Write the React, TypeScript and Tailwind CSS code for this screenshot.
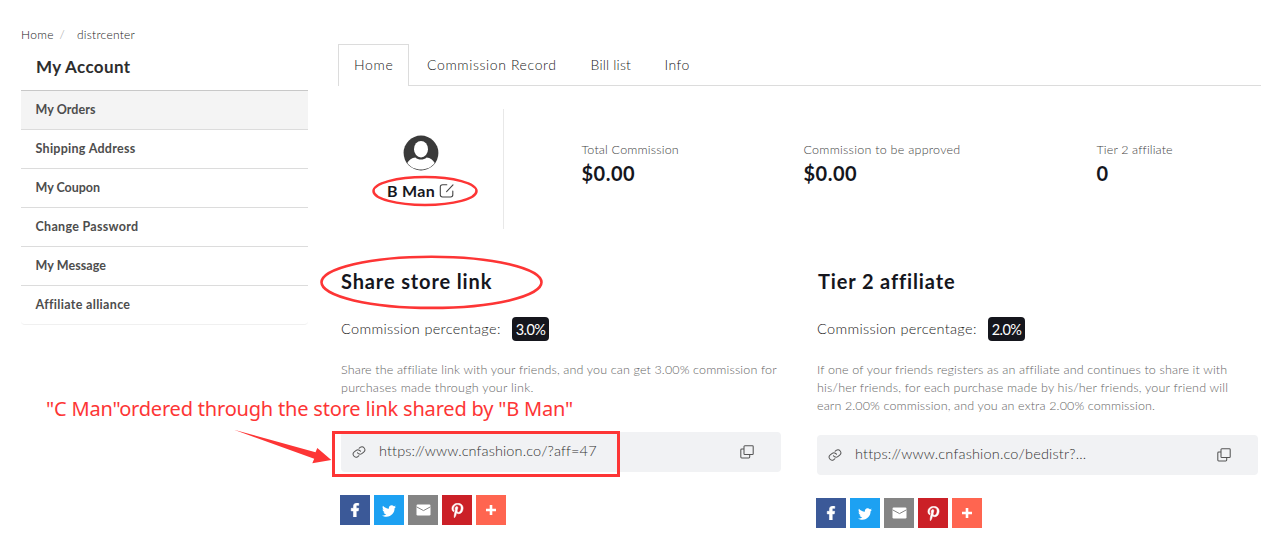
import type { ReactNode } from "react";
import { FaFacebookF, FaPinterestP, FaTwitter } from "react-icons/fa";

const menu = [
  { label: "My Orders", cls: "tracking-[0.066px] bg-[#f4f4f4] border-[#dcdcdc]" },
  { label: "Shipping Address", cls: "tracking-[0.279px] border-[#dcdcdc]" },
  { label: "My Coupon", cls: "tracking-[-0.023px] border-[#dcdcdc]" },
  { label: "Change Password", cls: "tracking-[0.301px] border-[#dcdcdc]" },
  { label: "My Message", cls: "tracking-[0.08px] border-[#dcdcdc]" },
  { label: "Affiliate alliance", cls: "tracking-[0.32px] border-[#f0f0f0] rounded-b" },
];

function Sidebar() {
  return (
    <aside className="w-[287px] shrink-0 pt-[27px]">
      <nav className="flex h-4 items-center text-[12px] font-light leading-4 text-[#222]">
        <span className="w-[38.5px] tracking-[0.35px]">Home</span>
        <span className="w-[17.5px] text-[#999]">/</span>
        <span className="tracking-[0.243px]">distrcenter</span>
      </nav>
      <h2 className="flex h-[48px] items-center border-b border-[#c8c8c8] pl-[15px] text-[17px] font-bold tracking-[0.369px] text-[#2d2d2d]">
        My Account
      </h2>
      <ul>
        {menu.map((m) => (
          <li key={m.label} className={`flex h-[39px] items-center border-b pl-[14.5px] pt-px text-[12.5px] font-bold text-[#4d4d4d] ${m.cls}`}>
            {m.label}
          </li>
        ))}
      </ul>
    </aside>
  );
}

function Tabs() {
  return (
    <div className="flex h-[42px] border-b border-[#dcdcdc] text-[14px] font-light leading-[41px] text-[#222]">
      <div className="-mb-px h-[42px] w-[71px] border border-b-0 border-[#dcdcdc] bg-white pl-[15px] leading-[39px] tracking-[0.7px]">Home</div>
      <div className="w-[163px] pl-[18px] tracking-[0.62px]">Commission Record</div>
      <div className="w-[74px] pl-[18.5px] tracking-[0.2px]">Bill list</div>
      <div className="pl-[18.5px] tracking-[0.45px]">Info</div>
    </div>
  );
}

function Stat({ className, label, value }: { className: string; label: ReactNode; value: string }) {
  return (
    <div className={`shrink-0 pt-[33px] ${className}`}>
      <div className="h-4 whitespace-nowrap text-[12.5px] font-light leading-4 text-[#444]">{label}</div>
      <div className="mt-[3px] h-6 text-[20px] font-bold leading-6 tracking-[0.5px] text-[#15161d]">{value}</div>
    </div>
  );
}

function Avatar() {
  return (
    <svg className="h-9 w-9" viewBox="0 0 36 36">
      <circle cx="18" cy="18" r="17.4" fill="#3a3a3a" />
      <ellipse cx="18" cy="14.2" rx="7" ry="8.3" fill="#fff" />
      <path d="M4.3 28C5.8 24.8 8.8 22.6 12.4 22.4C15.4 25.2 20.6 25.2 23.6 22.4C27.2 22.6 30.2 24.8 31.7 28C28.5 32.4 23.5 34.5 18 34.5C12.5 34.5 7.5 32.4 4.3 28Z" fill="#fff" />
    </svg>
  );
}

function EditIcon() {
  return (
    <svg className="h-4 w-4" viewBox="0 0 16 16" fill="none" stroke="#444" strokeWidth="1.1" strokeLinecap="round" strokeLinejoin="round">
      <path d="M7.8 1.8H3.6Q1.3 1.8 1.3 4V11.8Q1.3 14 3.6 14H11.6Q13.8 14 13.8 11.8V8M7.6 8.6L14 1.9" />
    </svg>
  );
}

function LinkIcon() {
  return (
    <svg className="h-[14px] w-[14px]" viewBox="0 0 24 24" fill="none" stroke="#555" strokeWidth="1.7" strokeLinecap="round" strokeLinejoin="round">
      <g transform="rotate(7 12 12)">
        <path d="M9.5 13.5a5 5 0 0 0 7.54.54l3-3a5 5 0 0 0-7.07-7.07l-1.72 1.71" />
        <path d="M14.5 10.5a5 5 0 0 0-7.54-.54l-3 3a5 5 0 0 0 7.07 7.07l1.71-1.71" />
      </g>
    </svg>
  );
}

function CopyIcon() {
  return (
    <svg className="h-[14px] w-[14px]" viewBox="0 0 14 14" fill="none" stroke="#555" strokeWidth="1.05">
      <rect x="4" y="0.8" width="9.2" height="8.7" rx="0.8" />
      <path d="M4 4H1.7Q0.8 4 0.8 4.9V12.1Q0.8 13 1.7 13H8.8Q9.7 13 9.7 12.1V9.5" />
    </svg>
  );
}

function ShareButtons() {
  const box = "flex h-[30px] w-[30px] items-center justify-center text-white";
  return (
    <div className="-ml-px mt-[23px] flex gap-1">
      <div className={`${box} bg-[#3b5998]`}><FaFacebookF size={14} stroke="white" strokeWidth={22} /></div>
      <div className={`${box} bg-[#1da1f2]`}><FaTwitter size={14} className="mt-px" /></div>
      <div className={`${box} bg-[#848484]`}>
        <svg className="h-[12px] w-[15px]" viewBox="0 0 15 12">
          <rect x="0.5" y="0.5" width="14" height="11" rx="1.2" fill="#fff" />
          <path d="M0.5 2.8L7.5 6.6L14.5 2.8" fill="none" stroke="#848484" strokeWidth="1" />
        </svg>
      </div>
      <div className={`${box} bg-[#cb2027]`}><FaPinterestP size={15} stroke="white" strokeWidth={16} /></div>
      <div className={`${box} bg-[#ff6550]`}>
        <svg className="h-[10px] w-[10px]" viewBox="0 0 10 10"><path d="M5 0V10M0 5H10" stroke="#fff" strokeWidth="2.6" /></svg>
      </div>
    </div>
  );
}

function Panel({ title, rate, children, link, bodyClass }: { title: ReactNode; rate: string; children: ReactNode; link: ReactNode; bodyClass: string }) {
  return (
    <section>
      <h3 className="-mt-px h-7 whitespace-nowrap text-[20px] font-bold leading-7 text-[#15161d]">{title}</h3>
      <div className="mt-[22px] flex h-6 items-center text-[14.5px]">
        <span className="w-[171px] whitespace-nowrap font-light tracking-[0.32px] text-[#222]">Commission percentage:</span>
        <span className="flex h-6 w-[37px] items-center justify-center rounded-sm bg-[#15161d] pt-px tracking-[-0.594px] text-white">{rate}</span>
      </div>
      <div className={`mt-5 whitespace-nowrap text-[12.5px] font-light leading-[18px] text-[#666] ${bodyClass}`}>{children}</div>
      <div className="flex h-10 items-center rounded bg-[#f1f2f4] pl-[11px] pr-[27px]">
        <LinkIcon />
        <span className="-mt-0.5 ml-[13px] flex-1 whitespace-nowrap text-[14.5px] font-light text-[#333]">{link}</span>
        <CopyIcon />
      </div>
      <ShareButtons />
    </section>
  );
}

function Annotations() {
  return (
    <>
      <svg className="pointer-events-none absolute inset-0 h-[542px] w-[1280px]" viewBox="0 0 1280 542" fill="none" stroke="#fd3535">
        <ellipse cx="425" cy="191" rx="51.5" ry="14" strokeWidth="2.5" />
        <ellipse cx="431.5" cy="282.3" rx="110" ry="25.6" strokeWidth="2.6" />
        <rect x="333.5" y="432.5" width="285" height="43" strokeWidth="3" />
        <path d="M234 429.7L315.5 452.2L317.3 448L331.3 460L312.3 463.2L314.2 458.8Z" fill="#fd3535" stroke="none" />
      </svg>
      <p className="absolute left-[46px] top-[395px] whitespace-nowrap font-['Noto_Sans',sans-serif] text-[20px] leading-7 tracking-[-0.19px] text-[#fd3535]">
        "C Man"ordered through the store link shared by "B Man"
      </p>
    </>
  );
}

export default function App() {
  return (
    <div className="relative flex h-[542px] w-[1280px] overflow-hidden bg-white pl-[21px] font-['Lato',sans-serif]">
      <Sidebar />
      <main className="ml-[30px] w-[923px] pt-[44px]">
        <Tabs />
        <div className="mt-[23px] flex h-[120px]">
          <div className="flex w-[166px] flex-col items-center border-r border-[#e8e8e8] pt-[26px]">
            <Avatar />
            <div className="mt-2 flex h-6 items-center gap-1 whitespace-nowrap pl-px text-[16px] font-bold tracking-[0.303px] text-[#15161d]">
              B Man
              <EditIcon />
            </div>
          </div>
          <Stat className="ml-[77.5px] w-[222px]" label={<span className="tracking-[0.18px]">Total Commission</span>} value="$0.00" />
          <Stat className="w-[293px]" label={<span className="tracking-[0.258px]">Commission to be approved</span>} value="$0.00" />
          <Stat className="" label={<span className="tracking-[0.12px]">Tier 2 affiliate</span>} value="0" />
        </div>
        <div className="mt-[39px] flex gap-9 pl-[3px]">
          <div className="w-[440px]">
            <Panel
              title={<span className="tracking-[0.87px]">Share store link</span>}
              rate="3.0%"
              bodyClass="h-[71px]"
              link={<span className="tracking-[0.11px]">https://www.cnfashion.co/?aff=47</span>}
            >
              <div className="tracking-[0.138px]">Share the affiliate link with your friends, and you can get 3.00% commission for</div>
              <div className="tracking-[0.25px]">purchases made through your link.</div>
            </Panel>
          </div>
          <div className="w-[441px]">
            <Panel
              title={<span className="ml-px tracking-[0.87px]">Tier 2 affiliate</span>}
              rate="2.0%"
              bodyClass="h-[74px]"
              link={<span className="tracking-[0.17px]">https://www.cnfashion.co/bedistr?...</span>}
            >
              <div className="tracking-[0.15px]">If one of your friends registers as an affiliate and continues to share it with</div>
              <div className="tracking-[0.185px]">his/her friends, for each purchase made by his/her friends, your friend will</div>
              <div className="tracking-[0.13px]">earn 2.00% commission, and you an extra 2.00% commission.</div>
            </Panel>
          </div>
        </div>
      </main>
      <Annotations />
    </div>
  );
}
